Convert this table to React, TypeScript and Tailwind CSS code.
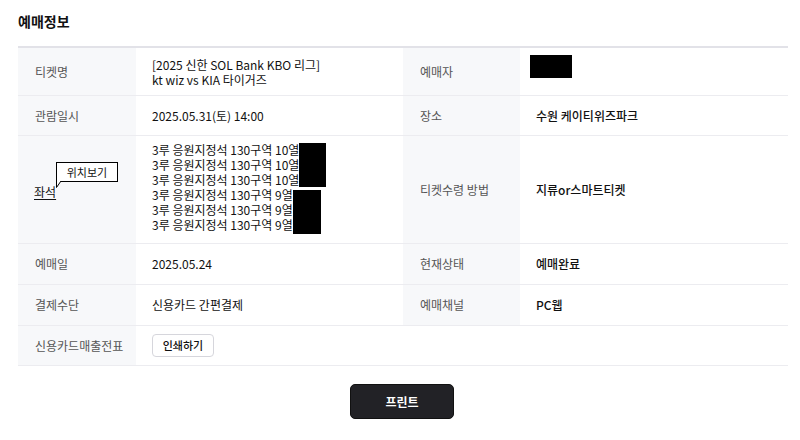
import React from "react";

const font = { fontFamily: '"Noto Sans CJK KR", "Noto Sans", sans-serif' };

const Label: React.FC<{ children: React.ReactNode }> = ({ children }) => (
  <div className="flex items-center pl-[17px] bg-[#f7f8fa] text-[12px] text-[#555]">
    {children}
  </div>
);

const Value: React.FC<{ children: React.ReactNode; strong?: boolean }> = ({
  children,
  strong,
}) => (
  <div
    className={`flex items-center pl-[16px] text-[12px] text-[#111] ${
      strong ? "font-medium" : ""
    }`}
  >
    {children}
  </div>
);

const seats = [
  "3루 응원지정석 130구역 10열",
  "3루 응원지정석 130구역 10열",
  "3루 응원지정석 130구역 10열",
  "3루 응원지정석 130구역 9열",
  "3루 응원지정석 130구역 9열",
  "3루 응원지정석 130구역 9열",
];

export default function App() {
  return (
    <div className="w-[800px] h-[440px] bg-white px-[18px]" style={font}>
      {/* Title */}
      <h2 className="pt-[11px] h-[31px] text-[14px] font-semibold leading-[20px] text-[#111]">
        예매정보
      </h2>
      <div className="mt-[15px] w-[770px] border-t-2 border-[#e2e2e8]">
        {/* Ticket name / buyer */}
        <div className="grid grid-cols-[118px_267px_117px_268px] h-[48px] border-b border-[#ececf0]">
          <Label>티켓명</Label>
          <div className="flex flex-col justify-center pl-[16px] text-[12px] leading-[15px] text-[#111]">
            <span>[2025 신한 SOL Bank KBO 리그]</span>
            <span>kt wiz vs KIA 타이거즈</span>
          </div>
          <Label>예매자</Label>
          <div className="flex items-start pl-[10px] pt-[7px]">
            <div className="w-[42px] h-[23px] bg-black" />
          </div>
        </div>

        {/* Date / place */}
        <div className="grid grid-cols-[118px_267px_117px_268px] h-[40px] border-b border-[#ececf0]">
          <Label>관람일시</Label>
          <Value>2025.05.31(토) 14:00</Value>
          <Label>장소</Label>
          <Value strong>수원 케이티위즈파크</Value>
        </div>

        {/* Seats */}
        <div className="grid grid-cols-[118px_267px_117px_268px] h-[108px] border-b border-[#ececf0]">
          <div className="relative flex items-center pl-[16px] pt-[4px] bg-[#f7f8fa] text-[12px]">
            <span className="underline underline-offset-2 text-[#111]">좌석</span>
            <div className="absolute left-[38px] top-[26px] w-[62px] h-[20px] border border-black bg-white flex items-center justify-center text-[11px] text-[#111]">
              위치보기
            </div>
            <svg
              className="absolute left-[38px] top-[45px]"
              width="8"
              height="8"
              viewBox="0 0 8 8"
            >
              <path d="M0.5 0 L0.5 6.5 L5 0" fill="white" stroke="black" strokeWidth="1" />
            </svg>
          </div>
          <div className="relative flex flex-col pl-[16px] pt-[6px] text-[12px] leading-[15px] text-[#111]">
            {seats.map((s, i) => (
              <span key={i} className="h-[15px]">
                {s}
              </span>
            ))}
            <div className="absolute left-[163px] top-[7px] w-[27px] h-[44px] bg-black" />
            <div className="absolute left-[157px] top-[54px] w-[28px] h-[44px] bg-black" />
          </div>
          <Label>티켓수령 방법</Label>
          <Value strong>지류or스마트티켓</Value>
        </div>

        {/* Purchase date / status */}
        <div className="grid grid-cols-[118px_267px_117px_268px] h-[41px] border-b border-[#ececf0]">
          <Label>예매일</Label>
          <Value>2025.05.24</Value>
          <Label>현재상태</Label>
          <Value strong>예매완료</Value>
        </div>

        {/* Payment / channel */}
        <div className="grid grid-cols-[118px_267px_117px_268px] h-[41px] border-b border-[#ececf0]">
          <Label>결제수단</Label>
          <Value>신용카드 간편결제</Value>
          <Label>예매채널</Label>
          <Value strong>PC웹</Value>
        </div>

        {/* Receipt */}
        <div className="grid grid-cols-[118px_1fr] h-[40px] border-b border-[#ececf0]">
          <Label>신용카드매출전표</Label>
          <div className="flex items-center pl-[16px]">
            <button className="w-[62px] h-[23px] rounded-[4px] border border-[#d6d6dc] bg-white text-[11px] font-medium text-[#111]">
              인쇄하기
            </button>
          </div>
        </div>
      </div>

      <div className="flex justify-center mt-[18px] pl-[4px]">
        <button className="w-[104px] h-[35px] rounded-[5px] bg-[#222226] border border-[#111] text-white text-[12px] font-bold">
          프린트
        </button>
      </div>
    </div>
  );
}
